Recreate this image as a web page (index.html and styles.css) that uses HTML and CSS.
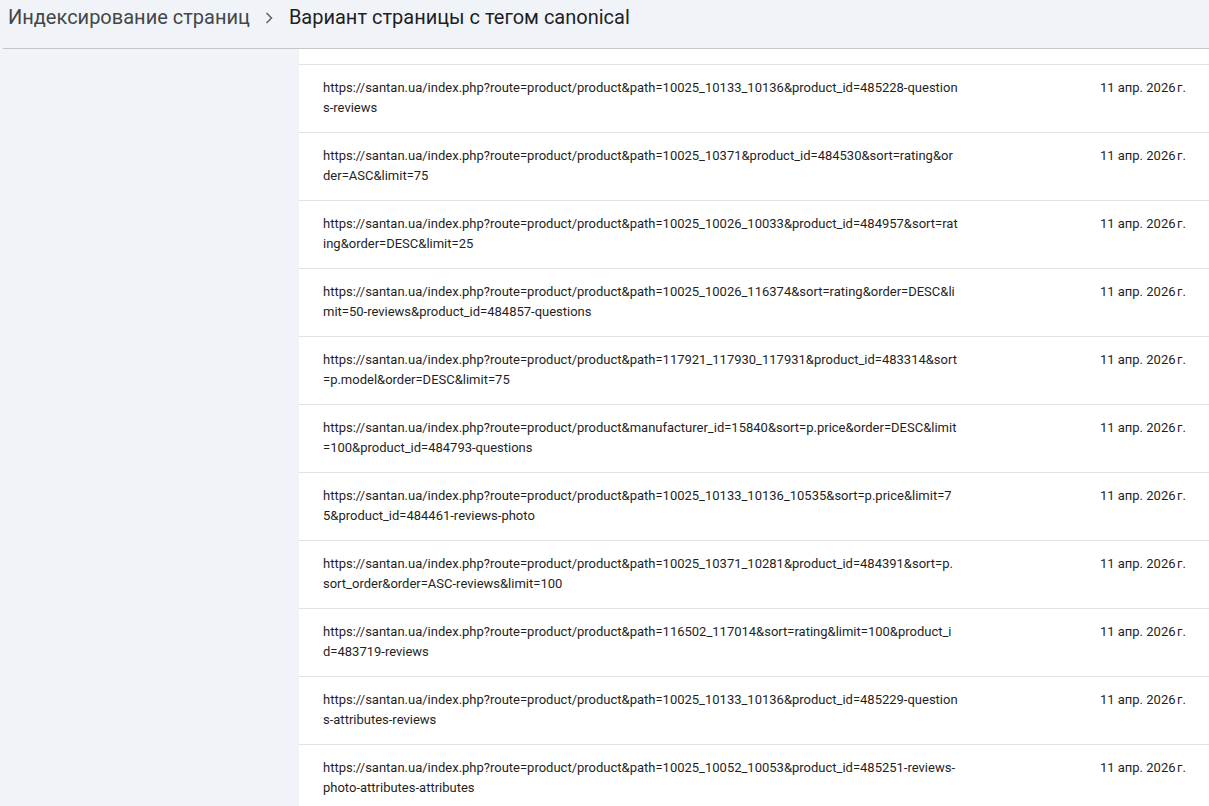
FILE: index.html
```html
<!DOCTYPE html>
<html lang="ru">
<head>
<meta charset="utf-8">
<title>Вариант страницы с тегом canonical</title>
<link rel="stylesheet" href="styles.css">
</head>
<body>
<header class="topbar">
  <nav class="crumbs">
    <span class="crumb-parent">Индексирование страниц</span>
    <svg class="chev" viewBox="0 0 12 12" width="12" height="12"><path d="M3.5 1 8.5 6l-5 5" fill="none" stroke="currentColor" stroke-width="1.5"/></svg>
    <span class="crumb-current">Вариант страницы с тегом canonical</span>
  </nav>
</header>
<main class="layout">
  <aside class="side"></aside>
  <section class="panel">
    <div class="row"><div class="url">https://santan.ua/index.php?route=product/product&amp;path=10025_10133_10136&amp;product_id=485228-questions-reviews</div><div class="date">11 апр. 2026&#8239;г.</div></div>
    <div class="row"><div class="url">https://santan.ua/index.php?route=product/product&amp;path=10025_10371&amp;product_id=484530&amp;sort=rating&amp;order=ASC&amp;limit=75</div><div class="date">11 апр. 2026&#8239;г.</div></div>
    <div class="row"><div class="url">https://santan.ua/index.php?route=product/product&amp;path=10025_10026_10033&amp;product_id=484957&amp;sort=rating&amp;order=DESC&amp;limit=25</div><div class="date">11 апр. 2026&#8239;г.</div></div>
    <div class="row"><div class="url">https://santan.ua/index.php?route=product/product&amp;path=10025_10026_116374&amp;sort=rating&amp;order=DESC&amp;limit=50-reviews&amp;product_id=484857-questions</div><div class="date">11 апр. 2026&#8239;г.</div></div>
    <div class="row"><div class="url">https://santan.ua/index.php?route=product/product&amp;path=117921_117930_117931&amp;product_id=483314&amp;sort=p.model&amp;order=DESC&amp;limit=75</div><div class="date">11 апр. 2026&#8239;г.</div></div>
    <div class="row"><div class="url">https://santan.ua/index.php?route=product/product&amp;manufacturer_id=15840&amp;sort=p.price&amp;order=DESC&amp;limit=100&amp;product_id=484793-questions</div><div class="date">11 апр. 2026&#8239;г.</div></div>
    <div class="row"><div class="url">https://santan.ua/index.php?route=product/product&amp;path=10025_10133_10136_10535&amp;sort=p.price&amp;limit=75&amp;product_id=484461-reviews-photo</div><div class="date">11 апр. 2026&#8239;г.</div></div>
    <div class="row"><div class="url">https://santan.ua/index.php?route=product/product&amp;path=10025_10371_10281&amp;product_id=484391&amp;sort=p.sort_order&amp;order=ASC-reviews&amp;limit=100</div><div class="date">11 апр. 2026&#8239;г.</div></div>
    <div class="row"><div class="url">https://santan.ua/index.php?route=product/product&amp;path=116502_117014&amp;sort=rating&amp;limit=100&amp;product_id=483719-reviews</div><div class="date">11 апр. 2026&#8239;г.</div></div>
    <div class="row"><div class="url">https://santan.ua/index.php?route=product/product&amp;path=10025_10133_10136&amp;product_id=485229-questions-attributes-reviews</div><div class="date">11 апр. 2026&#8239;г.</div></div>
    <div class="row"><div class="url">https://santan.ua/index.php?route=product/product&amp;path=10025_10052_10053&amp;product_id=485251-reviews-photo-attributes-attributes</div><div class="date">11 апр. 2026&#8239;г.</div></div>
  </section>
</main>
</body>
</html>
```
FILE: styles.css
```css
* { box-sizing: border-box; }
html, body { margin: 0; padding: 0; }
body {
  background: #f0f4f9;
  font-family: Roboto, "Noto Sans", Arial, sans-serif;
  color: #1f1f1f;
  height: 806px;
  overflow: hidden;
}
.topbar {
  height: 49px;
  margin-left: 3px;
  border-bottom: 1px solid #c4c7c5;
}
.crumbs {
  display: flex;
  align-items: center;
  height: 34px;
  margin-left: 5px;
  font-size: 20px;
}
.crumb-parent { color: #444746; }
.chev { color: #5f6368; margin: 1px 14px 0 13px; }
.crumb-current { color: #1f1f1f; }
.layout {
  display: flex;
}
.side { width: 299px; flex: none; }
.panel {
  flex: 1;
  background: #fff;
  padding-top: 15px;
  min-height: 760px;
}
.row {
  display: flex;
  justify-content: space-between;
  border-top: 1px solid #e3e3e3;
  padding: 13px 23px 14px 24px;
  font-size: 13px;
  line-height: 20px;
}
.url {
  width: 635px;
  word-break: break-all;
}
.date { white-space: nowrap; }
```
